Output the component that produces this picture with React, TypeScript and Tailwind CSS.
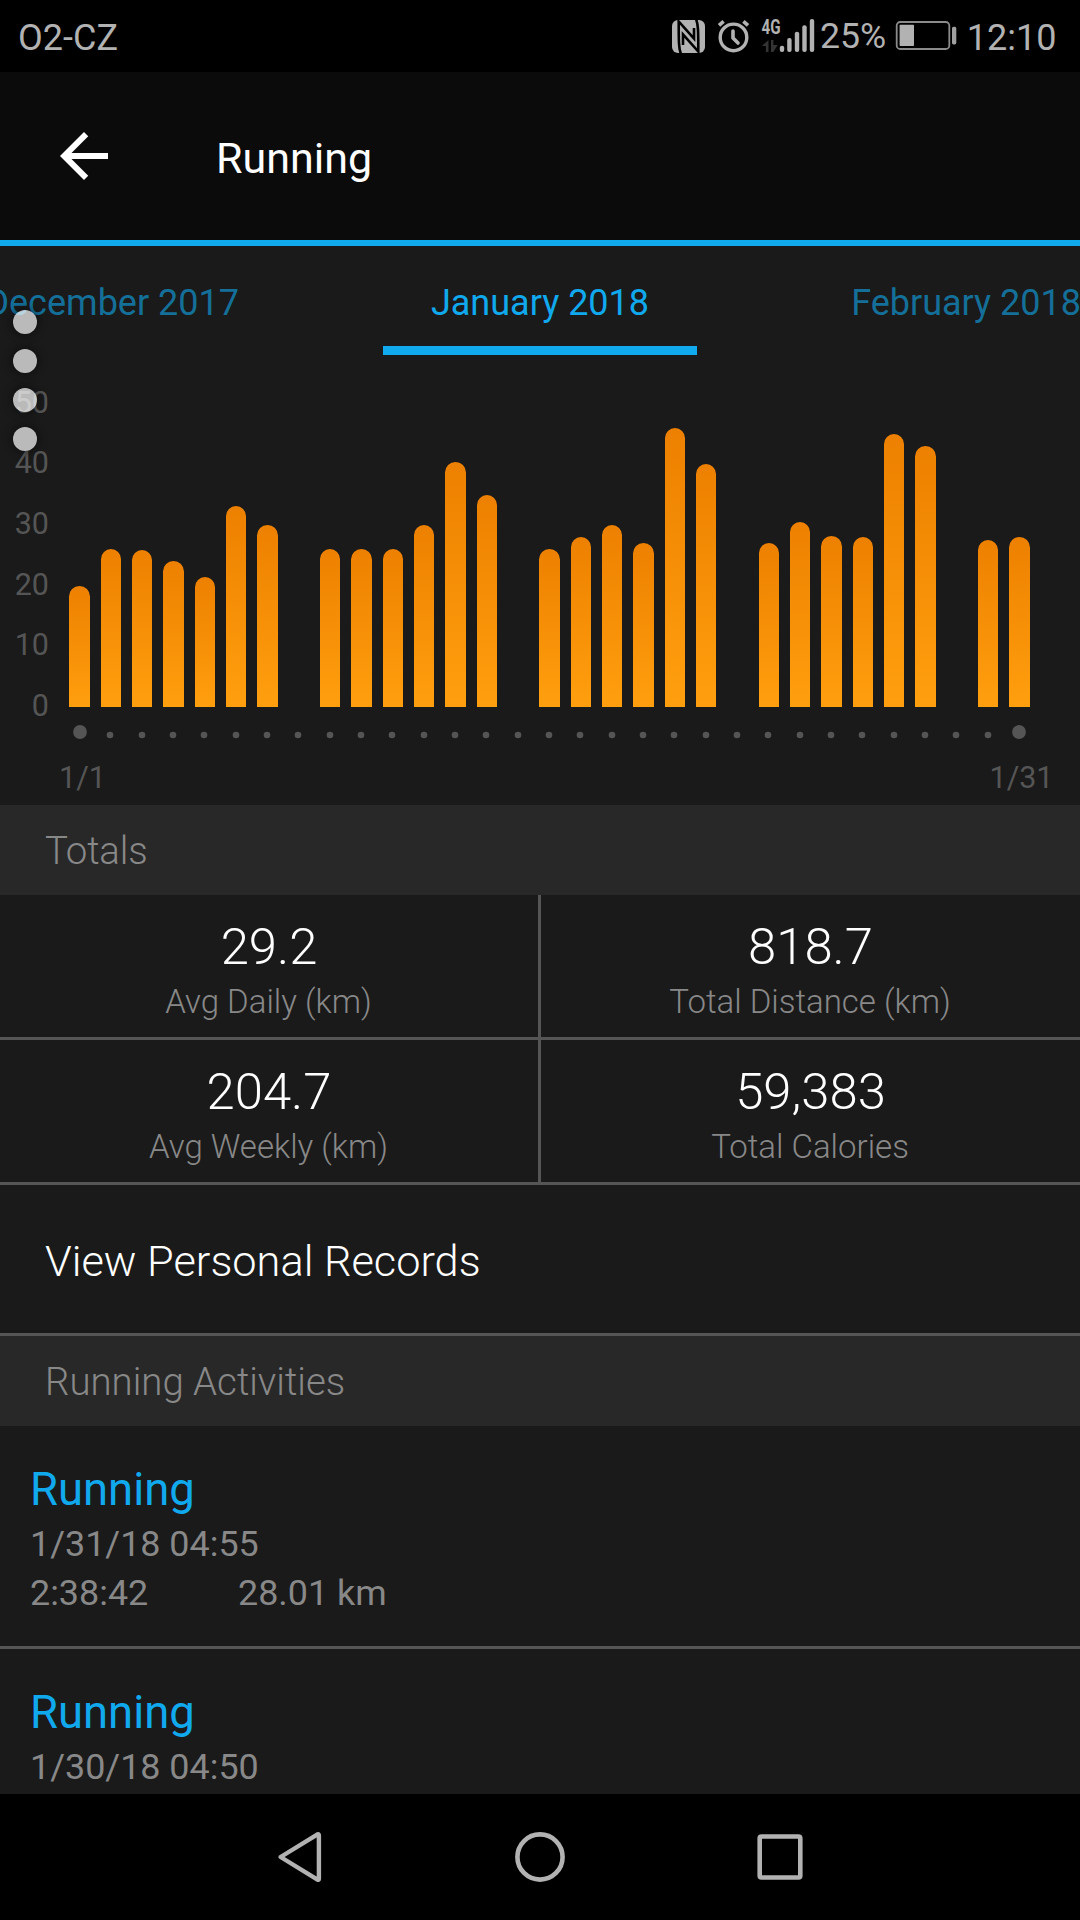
import React from 'react';

const PITCH = 31.3333;

// Top edge of each day's bar on the chart canvas; null marks a rest day.
const barTops: (number | null)[] = [
  586, 549, 550, 561, 577, 506, 525, null,
  549, 549, 549, 525, 462, 495, null,
  549, 537, 525, 543, 428, 464, null,
  543, 522, 536, 537, 434, 446, null,
  540, 537,
];

const BASELINE = 707;

const axisLabels = [
  { value: '50', y: 413 },
  { value: '40', y: 473 },
  { value: '30', y: 534 },
  { value: '20', y: 595 },
  { value: '10', y: 655.4 },
  { value: '0', y: 716.4 },
];

function NfcIcon() {
  return (
    <svg width="33" height="33" viewBox="0 0 33 33" fill="none">
      <rect width="33" height="33" rx="6" fill="#b2b2b2" />
      <g stroke="#000" strokeWidth="2.6" strokeLinejoin="miter">
        <path d="M9 34C6.8 29 6.7 22 6.7 1.5L22 18.5V8" />
        <path d="M24 -1C26.2 4 26.3 11 26.3 31.5L11 14.5V25" />
      </g>
    </svg>
  );
}

function AlarmIcon() {
  return (
    <svg width="34" height="34" viewBox="0 0 34 34" fill="none" stroke="#b2b2b2" strokeWidth="3.4" strokeLinecap="round">
      <circle cx="16.5" cy="18.4" r="13.3" />
      <path d="M16 12v7l5 5" strokeWidth="3.6" strokeLinejoin="round" />
      <path d="M2 6.4l4.6-4M26.4 2.4l4.6 4" strokeLinecap="butt" strokeWidth="3.6" />
    </svg>
  );
}

function SignalIcon() {
  return (
    <svg width="54" height="34" viewBox="761 19 54 34" className="overflow-visible">
      <text
        x="761.5"
        y="34"
        textLength="19"
        lengthAdjust="spacingAndGlyphs"
        className="font-['Roboto'] text-[21px] font-bold"
        fill="#b2b2b2"
      >
        4G
      </text>
      <path d="M768.5 40v12h-2.6v-6H761.8zM771 40h2.4v5h4.3L773.4 52H771z" fill="#333" />
      <g fill="#b2b2b2">
        <rect x="779.8" y="45.7" width="4.4" height="6.4" rx="2" />
        <rect x="787.2" y="38" width="4.4" height="14.1" rx="2" />
        <rect x="794.8" y="31.7" width="4.4" height="20.4" rx="2" />
        <rect x="802.3" y="25.3" width="4.4" height="26.8" rx="2" />
        <rect x="809.8" y="19" width="4.4" height="33.1" rx="2" />
      </g>
    </svg>
  );
}

function BatteryIcon() {
  return (
    <svg width="62" height="30" viewBox="895 21 62 30">
      <rect x="896.7" y="22" width="52.6" height="27" rx="3.5" fill="none" stroke="#8a8a8a" strokeWidth="1.8" />
      <rect x="899.6" y="24.8" width="14.4" height="21.2" rx="0.8" fill="#b2b2b2" />
      <rect x="952" y="26.8" width="4.3" height="17.6" rx="1.6" fill="#a0a0a0" />
    </svg>
  );
}

function StatusBar() {
  return (
    <div className="flex h-[72px] shrink-0 items-start bg-black pr-[23.6px] pl-[18px] text-[36px] leading-[48px] text-[#b2b2b2]">
      <span className="mt-[14px]">O2-CZ</span>
      <div className="ml-auto flex items-start">
        <div className="mt-5"><NfcIcon /></div>
        <div className="mt-[19px] ml-3"><AlarmIcon /></div>
        <div className="mt-[19px] ml-[10px]"><SignalIcon /></div>
        <span className="mt-3 ml-[5px] text-[35.7px]">25%</span>
        <div className="mt-[21px] ml-[9px]"><BatteryIcon /></div>
        <span className="mt-[14px] ml-[9.6px]">12:10</span>
      </div>
    </div>
  );
}

function Header() {
  return (
    <header className="flex h-[174px] shrink-0 items-center border-b-[6px] border-[#11a9ed] bg-[#0b0b0b] pl-12">
      <svg width="72" height="72" viewBox="0 0 24 24" fill="#fff">
        <path d="M20 11H7.83l5.59-5.59L12 4l-8 8 8 8 1.41-1.41L7.83 13H20v-2z" />
      </svg>
      <h1 className="ml-24 pt-1 text-[43px] leading-[54px] text-white">Running</h1>
    </header>
  );
}

function MonthTabs() {
  return (
    <nav className="shrink-0">
      <div className="grid grid-cols-[239px_1fr_239px] pt-[33px] text-[36px] leading-[48px] whitespace-nowrap text-[#146f99]">
        <span className="flex justify-end">December 2017</span>
        <span className="text-center text-[#11a9ed]">January 2018</span>
        <span className="-mr-px text-right">February 2018</span>
      </div>
      <div className="mx-auto mt-[19px] h-[9px] w-[314px] bg-[#11a9ed]" />
    </nav>
  );
}

function DistanceChart() {
  return (
    <svg width="1080" height="450" viewBox="0 355 1080 450" className="block shrink-0">
      <defs>
        <linearGradient id="bar" x1="0" y1="0" x2="0" y2="1">
          <stop offset="0" stopColor="#ed8000" />
          <stop offset="1" stopColor="#ff9f0e" />
        </linearGradient>
      </defs>
      <g className="font-['Roboto'] text-[30.5px]" fill="#555">
        {axisLabels.map((l) => (
          <text key={l.value} x="49" y={l.y} textAnchor="end">{l.value}</text>
        ))}
        <text x="59" y="788">1/1</text>
        <text x="989.5" y="788">1/31</text>
      </g>
      {barTops.map((top, i) => {
        if (top === null) return null;
        const left = Math.ceil(69 + PITCH * i - 0.01);
        const right = Math.floor(90 + PITCH * i + 0.01);
        const r = (right - left) / 2;
        return (
          <path
            key={i}
            fill="url(#bar)"
            d={`M${left} ${BASELINE}V${top + r}A${r} ${r} 0 0 1 ${right} ${top + r}V${BASELINE}Z`}
          />
        );
      })}
      <g fill="#555">
        <circle cx="80" cy="732" r="6.9" />
        {Array.from({ length: 29 }, (_, k) => (
          <circle key={k} cx={Math.ceil(78.66 + PITCH * (k + 1))} cy="735" r="3.3" />
        ))}
        <circle cx="1019" cy="732" r="6.9" />
      </g>
    </svg>
  );
}

function SectionBand({ title }: { title: string }) {
  return (
    <div className="flex h-[90px] shrink-0 items-center bg-[#282828] pt-0.5 pl-[45px] text-[38.4px] font-light text-[#888]">
      {title}
    </div>
  );
}

function Stat({ value, label }: { value: string; label: string }) {
  return (
    <div className="h-[142px] bg-[#1a1a1a] pt-[22px] text-center font-light">
      <div className="text-[50.8px] leading-[60px] text-white">{value}</div>
      <div className="mt-[5px] pr-px text-[33px] leading-10 text-[#888]">{label}</div>
    </div>
  );
}

function Activity({ date, duration, distance }: { date: string; duration: string; distance: string }) {
  return (
    <div className="h-[223px] shrink-0 border-b-[3px] border-[#555] pt-[37px] pl-[30px] text-[35.9px] leading-[48px] text-[#888]">
      <div className="text-[45.4px] leading-[54px] text-[#11a9ed]">Running</div>
      <div className="mt-[3px]">{date}</div>
      <div className="mt-px flex">
        <span className="w-[208px]">{duration}</span>
        <span>{distance}</span>
      </div>
    </div>
  );
}

function NavBar() {
  return (
    <div className="flex h-[126px] shrink-0 items-center bg-black pl-[275px]">
      <svg width="50" height="56" viewBox="275 1829 50 56" fill="none" stroke="#b2b2b2" strokeWidth="4.4" strokeLinejoin="round">
        <path d="M280.6 1857L317.5 1834.3Q318.9 1833.6 318.9 1835.3V1878.7Q318.9 1880.4 317.5 1879.7Z" />
      </svg>
      <svg className="ml-[187px]" width="56" height="56" viewBox="512 1829 56 56" fill="none" stroke="#b2b2b2" strokeWidth="4.6">
        <circle cx="540" cy="1857" r="22.6" />
      </svg>
      <svg className="ml-[184px]" width="56" height="56" viewBox="752 1829 56 56" fill="none" stroke="#b2b2b2" strokeWidth="4.6">
        <rect x="759.7" y="1836.5" width="40.6" height="41" rx="1.8" />
      </svg>
    </div>
  );
}

function FloatingDots() {
  return (
    <div className="absolute top-[310px] left-[13px] flex flex-col gap-[15.4px]">
      {[0, 1, 2, 3].map((i) => (
        <div key={i} className="size-[23.6px] rounded-full bg-white/70 shadow-[0_0_8px_2px_rgba(0,0,0,0.4)]" />
      ))}
    </div>
  );
}

export default function App() {
  return (
    <div className="relative flex h-[1920px] w-[1080px] flex-col overflow-hidden bg-[#1a1a1a] font-['Roboto',sans-serif]">
      <StatusBar />
      <Header />
      <main className="flex min-h-0 flex-1 flex-col overflow-hidden">
        <MonthTabs />
        <DistanceChart />
        <div className="tracking-[-0.2px]"><SectionBand title="Totals" /></div>
        <div className="grid shrink-0 grid-cols-[538px_539px] gap-[3px] border-b-[3px] border-[#555] bg-[#555]">
          <Stat value="29.2" label="Avg Daily (km)" />
          <Stat value="818.7" label="Total Distance (km)" />
          <Stat value="204.7" label="Avg Weekly (km)" />
          <Stat value="59,383" label="Total Calories" />
        </div>
        <div className="flex h-[151px] shrink-0 items-center border-b-[3px] border-[#555] pt-1.5 pl-[45px] text-[43.3px] font-light text-white">
          View Personal Records
        </div>
        <SectionBand title="Running Activities" />
        <Activity date="1/31/18 04:55" duration="2:38:42" distance="28.01 km" />
        <Activity date="1/30/18 04:50" duration="" distance="" />
      </main>
      <NavBar />
      <FloatingDots />
    </div>
  );
}
